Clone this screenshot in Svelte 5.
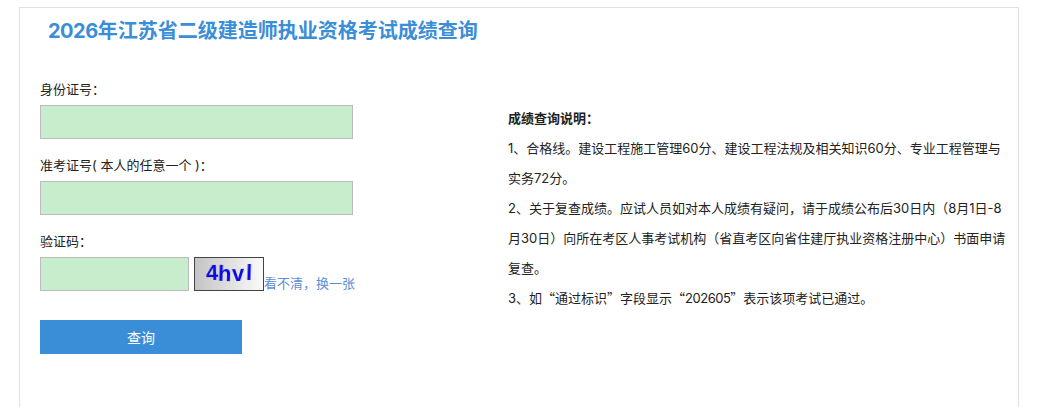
<script>
    const captcha = ['4', 'h', 'v', 'l'];
</script>

<div class="page">
    <div class="card">
        <h1><span class="year">2026</span>年江苏省二级建造师执业资格考试成绩查询</h1>
        <div class="columns">
            <form class="query-form" on:submit|preventDefault>
                <label for="idcard">身份证号：</label>
                <input id="idcard" type="text" />

                <label for="ticket">准考证号( 本人的任意一个 )：</label>
                <input id="ticket" type="text" />

                <label for="code">验证码：</label>
                <div class="code-row">
                    <input id="code" class="code-input" type="text" />
                    <span class="captcha">
                        {#each captcha as letter}
                            <span class="letter">{letter}</span>
                        {/each}
                    </span>
                    <a href="#top">看不清，换一张</a>
                </div>

                <button type="submit">查询</button>
            </form>

            <div class="notes">
                <p><strong>成绩查询说明：</strong></p>
                <p>1、合格线。建设工程施工管理60分、建设工程法规及相关知识60分、专业工程管理与实务72分。</p>
                <p>2、关于复查成绩。应试人员如对本人成绩有疑问，请于成绩公布后30日内（8月1日-8月30日）向所在考区人事考试机构（省直考区向省住建厅执业资格注册中心）书面申请复查。</p>
                <p>3、如<span class="cjk">“</span>通过标识<span class="cjk">”</span>字段显示<span class="cjk">“</span><span class="mark">202605</span><span class="cjk">”</span>表示该项考试已通过。</p>
            </div>
        </div>
    </div>
</div>

<style>
    :global(body) {
        margin: 0;
        background: #fff;
    }

    .page {
        height: 407px;
        overflow: hidden;
        padding: 7px 0 0 19px;
        box-sizing: border-box;
        font-family: Inter, "Noto Sans CJK SC", sans-serif;
        font-size: 13px;
        color: #222;
    }

    .card {
        width: 1000px;
        height: 420px;
        box-sizing: border-box;
        border: 1px solid #e0e0e0;
    }

    h1 {
        margin: 0;
        padding: 10px 0 0 28px;
        height: 30px;
        font-size: 20px;
        line-height: 26px;
        font-weight: 700;
        color: #3a8ed8;
    }

    .year {
        letter-spacing: -0.5px;
    }

    .columns {
        display: flex;
        padding: 0 0 0 20px;
    }

    .query-form {
        width: 468px;
        padding-top: 31px;
    }

    label {
        display: block;
        height: 20px;
        line-height: 20px;
        margin-bottom: 6px;
    }

    input {
        display: block;
        width: 313px;
        height: 34px;
        box-sizing: border-box;
        margin: 0 0 16px;
        padding: 0 6px;
        background: #c7edcc;
        border: 1px solid #bbb;
        outline: none;
    }

    .code-row {
        display: flex;
        align-items: flex-end;
        margin-bottom: 29px;
    }

    .code-input {
        width: 149px;
        margin: 0 5px 0 0;
    }

    .captcha {
        display: flex;
        align-items: center;
        justify-content: center;
        width: 70px;
        height: 34px;
        box-sizing: border-box;
        border: 1px solid #444;
        background: linear-gradient(to right, #c4c4c4, #fafafa);
        font-family: "Liberation Sans", sans-serif;
        font-size: 22px;
        font-weight: 700;
        color: #0a0ae0;
    }

    .letter {
        display: block;
        filter: blur(0.4px);
    }

    .letter:nth-child(1) {
        transform: rotate(-2deg) translateY(-1px);
    }

    .letter:nth-child(2) {
        transform: rotate(2deg);
    }

    .letter:nth-child(3) {
        transform: rotate(-2deg);
    }

    .letter:nth-child(4) {
        transform: rotate(2deg) translateY(-1px);
        margin-left: 2px;
    }

    .code-row a {
        color: #5b8dd6;
        text-decoration: none;
        line-height: 16px;
    }

    button {
        display: block;
        width: 202px;
        height: 34px;
        padding: 0;
        border: none;
        background: #3a8ed8;
        color: #fff;
        font-family: inherit;
        font-size: 14px;
    }

    .notes {
        width: 498px;
        padding-top: 55px;
        line-height: 30px;
    }

    .notes p {
        margin: 0;
    }

    .cjk {
        font-family: "Noto Sans CJK SC", sans-serif;
    }

    .mark {
        letter-spacing: -0.5px;
    }
</style>
